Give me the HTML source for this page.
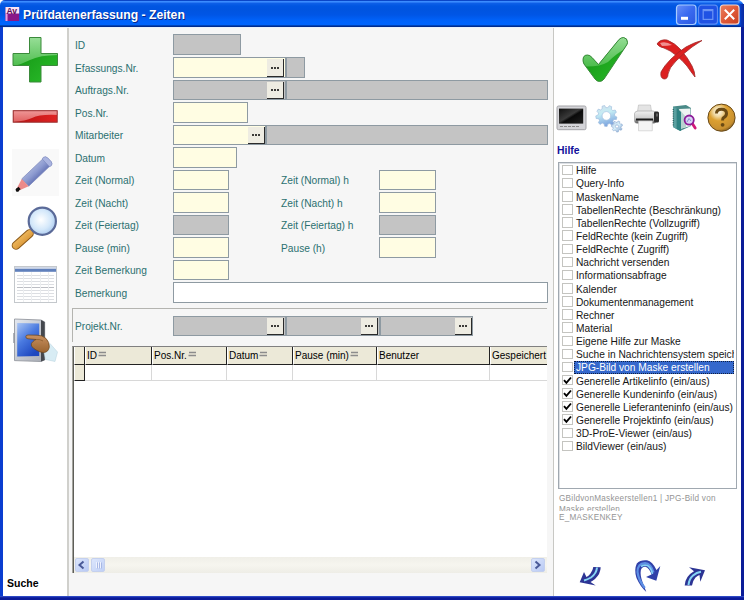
<!DOCTYPE html>
<html><head><meta charset="utf-8">
<style>
*{margin:0;padding:0;box-sizing:border-box}
html,body{width:744px;height:600px;overflow:hidden;background:#fff}
body{position:relative;font-family:"Liberation Sans",sans-serif}
.a{position:absolute}
#title{left:0;top:0;width:744px;height:27px;border-radius:5px 7px 0 0;
 background:linear-gradient(to bottom,#0a46c8 0px,#0a46c8 1px,#3a8cff 1px,#3a8cff 2px,#2878f4 2px,#2878f4 3px,#0e60e8 3px,#0056e2 6px,#0054e0 10px,#0056e6 15px,#0061f8 20px,#0064fc 23px,#0064fc 25px,#0044b8 25px,#0044b8 26px,#002c90 26px,#002c90 27px)}
#title .t{left:23px;top:8px;color:#fff;font-weight:bold;font-size:12.2px;letter-spacing:0;text-shadow:1px 1px 0 #0a2a8a}
.bord{background:#0a3dd0}
#main{left:69px;top:27px;width:484px;height:569px;background:#f6f6f6}
#lp{left:3px;top:27px;width:64px;height:569px;background:#fff}
#sep1{left:67px;top:27px;width:2px;height:569px;background:#d0d0cc}
#rp{left:554px;top:27px;width:187px;height:569px;background:#fff}
#sep2{left:553px;top:27px;width:1px;height:569px;background:#c8c8c4}
.lbl{color:#2b7070;font-size:10.2px;white-space:nowrap;line-height:12px}
.f{border:1px solid #8e9aa2}
.y{background:#fffde3}
.g{background:#c4c4c4}
.w{background:#fff}
.btn{width:17px;background:#eeece2;border-right:1.5px solid #2a2a2a;border-bottom:1.5px solid #2a2a2a}
.btn i{position:absolute;width:2px;height:2px;background:#000;border-radius:1px}
.hd{top:347px;height:18px;background:#ece9d8;border-left:1px solid #fff;border-right:1px solid #222;border-bottom:1px solid #222;font-size:10px;line-height:18px;padding-left:1px;white-space:nowrap;overflow:hidden;color:#000}
.cell{top:365px;height:16px;border-right:1px solid #d8d8d8;border-bottom:1px solid #d8d8d8;background:#fff}
.cb{position:absolute;left:3px;width:10.5px;height:10.5px;border:1px solid #c4c4c0;background:#fff}
.ck{position:absolute;left:0px;top:0px}
.it{position:absolute;left:15px;text-indent:1px;height:13px;line-height:13px;font-size:10.2px;white-space:nowrap;color:#161616;padding:0 1px}
.it.sel{background:#3568cc;color:#fff;outline:1px dotted #102040;outline-offset:-1px;width:160px}
.gt{font-size:8.2px;letter-spacing:.25px;line-height:10px;color:#949494;white-space:nowrap}
</style></head><body>
<!-- frame -->
<div class="a" id="title">
  <div class="a t">Prüfdatenerfassung - Zeiten</div>
</div>
<div class="a" style="left:739px;top:4px;width:5px;height:23px;background:linear-gradient(to right,rgba(0,40,170,0),#0836b8 2px,#0a2aa0)"></div>
<div class="a bord" style="left:0;top:27px;width:3px;height:573px"></div>
<div class="a" style="left:740px;top:27px;width:4px;height:573px;background:linear-gradient(to right,#3a5ad0 0,#3a5ad0 1px,#0a1c98 1px)"></div>
<div class="a" style="left:0;top:596px;width:744px;height:4px;background:linear-gradient(to bottom,#4060d8 0,#1a30b0 1px,#0a1a98 2px)"></div>
<div class="a" id="lp"></div>
<div class="a" id="sep1"></div>
<div class="a" id="main"></div>
<div class="a" id="sep2"></div>
<div class="a" id="rp"></div>

<div class="a" style="left:3px;top:27px;width:737px;height:1px;background:#eaf2fa"></div>
<!-- labels -->
<div class="a lbl" style="left:75px;top:40px">ID</div>
<div class="a lbl" style="left:75px;top:63px">Efassungs.Nr.</div>
<div class="a lbl" style="left:75px;top:85px">Auftrags.Nr.</div>
<div class="a lbl" style="left:75px;top:108px">Pos.Nr.</div>
<div class="a lbl" style="left:75px;top:130px">Mitarbeiter</div>
<div class="a lbl" style="left:75px;top:153px">Datum</div>
<div class="a lbl" style="left:75px;top:175px">Zeit (Normal)</div>
<div class="a lbl" style="left:75px;top:198px">Zeit (Nacht)</div>
<div class="a lbl" style="left:75px;top:220px">Zeit (Feiertag)</div>
<div class="a lbl" style="left:75px;top:243px">Pause (min)</div>
<div class="a lbl" style="left:75px;top:265px">Zeit Bemerkung</div>
<div class="a lbl" style="left:75px;top:288px">Bemerkung</div>
<div class="a lbl" style="left:281px;top:175px">Zeit (Normal) h</div>
<div class="a lbl" style="left:281px;top:198px">Zeit (Nacht) h</div>
<div class="a lbl" style="left:281px;top:220px">Zeit (Feiertag) h</div>
<div class="a lbl" style="left:281px;top:243px">Pause (h)</div>
<div class="a lbl" style="left:75px;top:321px">Projekt.Nr.</div>

<!-- fields -->
<div class="a f g" style="left:173px;top:34px;width:68px;height:21px"></div>
<div class="a f y" style="left:173px;top:57px;width:113px;height:21px"></div>
<div class="a f g" style="left:286px;top:57px;width:19px;height:21px"></div>
<div class="a btn" style="left:267px;top:59px;height:18px"><i style="left:4px;top:8px"></i><i style="left:7px;top:8px"></i><i style="left:10px;top:8px"></i></div>
<div class="a f g" style="left:173px;top:80px;width:113px;height:20px"></div>
<div class="a f g" style="left:286px;top:80px;width:262px;height:20px"></div>
<div class="a btn" style="left:267px;top:82px;height:17px"><i style="left:4px;top:7px"></i><i style="left:7px;top:7px"></i><i style="left:10px;top:7px"></i></div>
<div class="a f y" style="left:173px;top:102px;width:75px;height:21px"></div>
<div class="a f y" style="left:173px;top:125px;width:93px;height:20px"></div>
<div class="a f g" style="left:266px;top:125px;width:282px;height:20px"></div>
<div class="a btn" style="left:248px;top:127px;height:17px"><i style="left:4px;top:7px"></i><i style="left:7px;top:7px"></i><i style="left:10px;top:7px"></i></div>
<div class="a f y" style="left:173px;top:147px;width:64px;height:21px"></div>
<div class="a f y" style="left:173px;top:170px;width:56px;height:20px"></div>
<div class="a f y" style="left:379px;top:170px;width:57px;height:20px"></div>
<div class="a f y" style="left:173px;top:192px;width:56px;height:21px"></div>
<div class="a f y" style="left:379px;top:192px;width:57px;height:21px"></div>
<div class="a f g" style="left:173px;top:215px;width:56px;height:20px"></div>
<div class="a f g" style="left:379px;top:215px;width:57px;height:20px"></div>
<div class="a f y" style="left:173px;top:237px;width:56px;height:21px"></div>
<div class="a f y" style="left:379px;top:237px;width:57px;height:21px"></div>
<div class="a f y" style="left:173px;top:260px;width:56px;height:20px"></div>
<div class="a f w" style="left:173px;top:282px;width:375px;height:21px"></div>

<!-- group box -->
<div class="a" style="left:72px;top:308px;width:475px;height:34px;border-top:1px solid #b4b4b0;border-left:1px solid #b4b4b0"></div>
<div class="a f g" style="left:173px;top:316px;width:113px;height:20px"></div>
<div class="a f g" style="left:286px;top:316px;width:94px;height:20px"></div>
<div class="a f g" style="left:380px;top:316px;width:93px;height:20px"></div>
<div class="a btn" style="left:267px;top:318px;height:17px"><i style="left:4px;top:7px"></i><i style="left:7px;top:7px"></i><i style="left:10px;top:7px"></i></div>
<div class="a btn" style="left:361px;top:318px;height:17px"><i style="left:4px;top:7px"></i><i style="left:7px;top:7px"></i><i style="left:10px;top:7px"></i></div>
<div class="a btn" style="left:455px;top:318px;height:17px"><i style="left:4px;top:7px"></i><i style="left:7px;top:7px"></i><i style="left:10px;top:7px"></i></div>

<!-- grid -->
<div class="a" style="left:72px;top:346px;width:475px;height:227px;background:#fff;border-left:1px solid #a4a49e;border-top:1px solid #808080;box-shadow:inset 1px 0 0 #5e5e58"></div>
<div class="a hd" style="left:74px;width:11px"></div>
<div class="a hd" style="left:85px;width:67px">ID<svg width="8" height="6" style="margin-left:1px;vertical-align:2px"><path d="M1 1.5H8M0.5 4.5H8" stroke="#8c8c8c" stroke-width="1.6"/></svg></div>
<div class="a hd" style="left:152px;width:75px">Pos.Nr.<svg width="8" height="6" style="margin-left:1px;vertical-align:2px"><path d="M1 1.5H8M0.5 4.5H8" stroke="#8c8c8c" stroke-width="1.6"/></svg></div>
<div class="a hd" style="left:227px;width:66px">Datum<svg width="8" height="6" style="margin-left:1px;vertical-align:2px"><path d="M1 1.5H8M0.5 4.5H8" stroke="#8c8c8c" stroke-width="1.6"/></svg></div>
<div class="a hd" style="left:293px;width:84px">Pause (min)<svg width="8" height="6" style="margin-left:1px;vertical-align:2px"><path d="M1 1.5H8M0.5 4.5H8" stroke="#8c8c8c" stroke-width="1.6"/></svg></div>
<div class="a hd" style="left:377px;width:113px">Benutzer</div>
<div class="a hd" style="left:490px;width:57px;border-right:none">Gespeichert</div>
<div class="a" style="left:74px;top:365px;width:11px;height:16px;background:#ece9d8;border-left:1px solid #fff;border-right:1px solid #222;border-bottom:1px solid #222"></div>
<div class="a cell" style="left:85px;width:67px"></div>
<div class="a cell" style="left:152px;width:75px"></div>
<div class="a cell" style="left:227px;width:66px"></div>
<div class="a cell" style="left:293px;width:84px"></div>
<div class="a cell" style="left:377px;width:113px"></div>
<div class="a cell" style="left:490px;width:57px;border-right:none"></div>
<!-- scrollbar -->
<div class="a" style="left:74px;top:557px;width:473px;height:16px;background:linear-gradient(to bottom,#f0efe8,#f6f5ef 50%,#eeede6)"></div>
<div class="a" style="left:75px;top:558px;width:14px;height:14px;border-radius:2px;background:linear-gradient(135deg,#dce6fc,#b8c9f4);border:1px solid #c4d0ee"></div>
<div class="a" style="left:91px;top:558px;width:14px;height:14px;border-radius:2px;background:linear-gradient(135deg,#dce6fc,#c0d0f6);border:1px solid #c4d0ee"></div>
<div class="a" style="left:531px;top:558px;width:14px;height:14px;border-radius:2px;background:linear-gradient(135deg,#dce6fc,#b8c9f4);border:1px solid #c4d0ee"></div>
<svg class="a" style="left:74px;top:557px" width="473" height="16" viewBox="74 557 473 16">
<path d="M83.5 561.5L79.5 565L83.5 568.5" fill="none" stroke="#4a5a98" stroke-width="2"/>
<path d="M96.5 562v6M98.5 562v6M100.5 562v6" stroke="#eef2fe" stroke-width="1"/>
<path d="M97.5 562.5v6M99.5 562.5v6M101.5 562.5v6" stroke="#a8b8e4" stroke-width="1"/>
<path d="M535.5 561.5L539.5 565L535.5 568.5" fill="none" stroke="#4a5a98" stroke-width="2"/>
</svg>

<!-- left toolbar text -->
<div class="a" style="left:7px;top:577px;font-size:10.5px;font-weight:bold;color:#000">Suche</div>

<!-- right panel -->
<div class="a" style="left:557px;top:145px;font-size:10.4px;font-weight:bold;color:#10109a">Hilfe</div>
<div class="a" style="left:558px;top:162px;width:179px;height:327px;border:1px solid #a0a8b0;box-shadow:inset 1px 1px 0 #dde0e4;background:#fff"></div>

<!-- checklist -->
<div class="a" style="left:559px;top:163px;width:175px;height:325px;overflow:hidden">
<div class="cb" style="top:1.7px"></div><div class="it" style="top:1.3px">Hilfe</div>
<div class="cb" style="top:14.8px"></div><div class="it" style="top:14.4px">Query-Info</div>
<div class="cb" style="top:28.0px"></div><div class="it" style="top:27.6px">MaskenName</div>
<div class="cb" style="top:41.1px"></div><div class="it" style="top:40.7px">TabellenRechte (Beschränkung)</div>
<div class="cb" style="top:54.3px"></div><div class="it" style="top:53.9px">TabellenRechte (Vollzugriff)</div>
<div class="cb" style="top:67.4px"></div><div class="it" style="top:67.0px">FeldRechte (kein Zugriff)</div>
<div class="cb" style="top:80.5px"></div><div class="it" style="top:80.1px">FeldRechte ( Zugriff)</div>
<div class="cb" style="top:93.7px"></div><div class="it" style="top:93.3px">Nachricht versenden</div>
<div class="cb" style="top:106.8px"></div><div class="it" style="top:106.4px">Informationsabfrage</div>
<div class="cb" style="top:120.0px"></div><div class="it" style="top:119.6px">Kalender</div>
<div class="cb" style="top:133.1px"></div><div class="it" style="top:132.7px">Dokumentenmanagement</div>
<div class="cb" style="top:146.2px"></div><div class="it" style="top:145.8px">Rechner</div>
<div class="cb" style="top:159.4px"></div><div class="it" style="top:159.0px">Material</div>
<div class="cb" style="top:172.5px"></div><div class="it" style="top:172.1px">Eigene Hilfe zur Maske</div>
<div class="cb" style="top:185.7px"></div><div class="it" style="top:185.3px">Suche in Nachrichtensystem speichern</div>
<div class="cb" style="top:198.8px"></div><div class="it sel" style="top:198.4px">JPG-Bild von Maske erstellen</div>
<div class="cb" style="top:211.9px"><svg class="ck" width="9" height="9" viewBox="0 0 9 9"><path d="M1 4.2L3.4 6.8L8 1.5" fill="none" stroke="#000" stroke-width="1.9"/></svg></div><div class="it" style="top:211.5px">Generelle Artikelinfo (ein/aus)</div>
<div class="cb" style="top:225.1px"><svg class="ck" width="9" height="9" viewBox="0 0 9 9"><path d="M1 4.2L3.4 6.8L8 1.5" fill="none" stroke="#000" stroke-width="1.9"/></svg></div><div class="it" style="top:224.7px">Generelle Kundeninfo (ein/aus)</div>
<div class="cb" style="top:238.2px"><svg class="ck" width="9" height="9" viewBox="0 0 9 9"><path d="M1 4.2L3.4 6.8L8 1.5" fill="none" stroke="#000" stroke-width="1.9"/></svg></div><div class="it" style="top:237.8px">Generelle Lieferanteninfo (ein/aus)</div>
<div class="cb" style="top:251.4px"><svg class="ck" width="9" height="9" viewBox="0 0 9 9"><path d="M1 4.2L3.4 6.8L8 1.5" fill="none" stroke="#000" stroke-width="1.9"/></svg></div><div class="it" style="top:251.0px">Generelle Projektinfo (ein/aus)</div>
<div class="cb" style="top:264.5px"></div><div class="it" style="top:264.1px">3D-ProE-Viewer (ein/aus)</div>
<div class="cb" style="top:277.6px"></div><div class="it" style="top:277.2px">BildViewer (ein/aus)</div>
</div>
<div class="a gt" style="left:559px;top:494px">GBildvonMaskeerstellen1 | JPG-Bild von</div>
<div class="a gt" style="left:559px;top:505px;height:6px;overflow:hidden">Maske erstellen</div>
<div class="a gt" style="left:559px;top:513px">E_MASKENKEY</div>

<!-- ICONS: one full-window svg overlay -->
<svg class="a" style="left:0;top:0" width="744" height="600" viewBox="0 0 744 600">
<defs>
 <linearGradient id="gG" x1="0" y1="0" x2="0" y2="1"><stop offset="0" stop-color="#9be09b"/><stop offset="1" stop-color="#4cbc4c"/></linearGradient>
 <linearGradient id="gGd" x1="0" y1="0" x2="1" y2="1"><stop offset="0" stop-color="#0f8a0f"/><stop offset="1" stop-color="#2cc02c"/></linearGradient>
 <linearGradient id="gR" x1="0" y1="0" x2="0" y2="1"><stop offset="0" stop-color="#f09a9a"/><stop offset="1" stop-color="#e06060"/></linearGradient>
 <linearGradient id="gRd" x1="0" y1="0" x2="1" y2="0"><stop offset="0" stop-color="#b81010"/><stop offset="1" stop-color="#e02424"/></linearGradient>
 <linearGradient id="gPen" x1="0" y1="0" x2="0" y2="1"><stop offset="0" stop-color="#a0acd8"/><stop offset=".45" stop-color="#8c9ad0"/><stop offset="1" stop-color="#6a78b8"/></linearGradient>
 <radialGradient id="gLens" cx=".45" cy=".45" r=".6"><stop offset="0" stop-color="#ffffff"/><stop offset=".6" stop-color="#d4e8fa"/><stop offset="1" stop-color="#a8c8ee"/></radialGradient>
 <linearGradient id="gHandle" x1="0" y1="0" x2="1" y2="1"><stop offset="0" stop-color="#f8c870"/><stop offset="1" stop-color="#d08828"/></linearGradient>
 <linearGradient id="gScr" x1="0" y1="0" x2=".6" y2="1"><stop offset="0" stop-color="#a8c4f4"/><stop offset=".5" stop-color="#4a7ae0"/><stop offset="1" stop-color="#1e48c0"/></linearGradient>
 <radialGradient id="gHelp" cx=".38" cy=".28" r=".8"><stop offset="0" stop-color="#fffcf0"/><stop offset=".22" stop-color="#f0d8a0"/><stop offset=".42" stop-color="#dca030"/><stop offset=".8" stop-color="#c89030"/><stop offset="1" stop-color="#6a4c18"/></radialGradient>
 <linearGradient id="gGear" x1="0" y1="0" x2=".3" y2="1"><stop offset="0" stop-color="#d4e0ec"/><stop offset=".45" stop-color="#c4ecf4"/><stop offset="1" stop-color="#80a8e0"/></linearGradient><linearGradient id="gGear2" x1="0" y1="0" x2="1" y2="1"><stop offset="0" stop-color="#b8cce4"/><stop offset=".5" stop-color="#d8f0fa"/><stop offset="1" stop-color="#7a98c8"/></linearGradient>
 <linearGradient id="gMon" x1="0" y1="0" x2="1" y2="1"><stop offset="0" stop-color="#101010"/><stop offset=".45" stop-color="#3a3a3a"/><stop offset=".55" stop-color="#0a0a0a"/><stop offset="1" stop-color="#202020"/></linearGradient>
 <linearGradient id="gPrn" x1="0" y1="0" x2="0" y2="1"><stop offset="0" stop-color="#f0f0f0"/><stop offset=".6" stop-color="#cccccc"/><stop offset="1" stop-color="#505050"/></linearGradient>
 <linearGradient id="gMinB" x1="0" y1="0" x2="1" y2="1"><stop offset="0" stop-color="#6a90f8"/><stop offset=".5" stop-color="#3a6af0"/><stop offset="1" stop-color="#2a58e0"/></linearGradient>
 <linearGradient id="gClose" x1="0" y1="0" x2="1" y2="1"><stop offset="0" stop-color="#e88060"/><stop offset=".5" stop-color="#e05a38"/><stop offset="1" stop-color="#c84020"/></linearGradient>
 <clipPath id="cPlus"><path d="M29.5 37.5h11.5v16h16.5v12h-16.5v16.5h-11.5v-16.5h-16.5v-12h16.5z"/></clipPath>
 <clipPath id="cMinus"><rect x="13.2" y="110.7" width="44" height="11.5"/></clipPath>
 <clipPath id="cCheck"><path d="M583 60 Q583 55 587.5 55 Q590 55 592 57.5 L598.5 64.5 L619 39.5 Q621 37.5 623.5 37.5 Q627.5 38 627.5 42.5 Q627.5 44 626 46 L604 79 Q602 81.5 599.5 81.5 Q597 81.5 595 79 L584 64 Q583 62 583 60Z"/></clipPath>
</defs>

<!-- title app icon -->
<rect x="5.5" y="7" width="13.7" height="14" fill="#8e1c8e"/>
<rect x="5.5" y="7" width="13.7" height="6.5" fill="#fbe4f4"/>
<rect x="5.5" y="13.5" width="2" height="7.5" fill="#e8a0e0"/><rect x="8" y="14" width="11" height="7" fill="#8a1888"/>
<text x="6.5" y="13.6" font-family="Liberation Sans" font-weight="bold" font-size="8.6" letter-spacing="-.2" fill="#5c0c58">Av</text>

<!-- title buttons -->
<rect x="676.5" y="5" width="19.5" height="19.5" rx="3" fill="url(#gMinB)" stroke="#a8ccff" stroke-width="1.2"/>
<rect x="681" y="16.8" width="7" height="3" fill="#fff"/>
<rect x="698.5" y="5.2" width="19" height="19" rx="3" fill="#1f52e4" stroke="#5a8cf4" stroke-width="1.2"/>
<rect x="703.2" y="9.6" width="9.6" height="9.8" fill="none" stroke="#6c94f4" stroke-width="1.2"/>
<rect x="703.2" y="9.2" width="9.6" height="2" fill="#6c94f4"/>
<rect x="720.3" y="5" width="18.7" height="19.2" rx="3" fill="url(#gClose)" stroke="#f4d4c8" stroke-width="1.2"/>
<path d="M724.8 9.8L734.2 19.2M734.2 9.8L724.8 19.2" stroke="#fff" stroke-width="2"/>

<!-- plus -->
<g clip-path="url(#cPlus)">
 <rect x="12" y="36" width="47" height="47" fill="url(#gGd)"/>
 <path d="M10 36H60V55Q40 55 30 60Q20 65 10 67Z" fill="url(#gG)"/>
</g>
<path d="M29.5 37.5h11.5v16h16.5v12h-16.5v16.5h-11.5v-16.5h-16.5v-12h16.5z" fill="none" stroke="#3b8a3b" stroke-width="1"/>

<!-- minus -->
<g clip-path="url(#cMinus)">
 <rect x="13" y="110" width="45" height="13" fill="url(#gRd)"/>
 <path d="M12 110H58V115Q40 114 32 118Q26 121 12 122Z" fill="url(#gR)"/>
</g>
<rect x="13.2" y="110.7" width="44" height="11.5" fill="none" stroke="#983030" stroke-width="1"/>

<!-- pencil -->
<rect x="12" y="149" width="47" height="47" fill="#f9f9f9"/>
<g transform="translate(16.5 190.8) rotate(-43.5)">
 <path d="M12 -5 L42 -5 Q44.5 -5.5 45 -2.5 L45 2.5 Q44.5 5.5 42 5 L12 5 Z" fill="url(#gPen)" stroke="#7c88bc" stroke-width=".7"/>
 <path d="M40.5 -5.3 L42.5 -5.8 Q45 -5.5 45.3 -2.5 L45.3 2.5 Q45 5.5 42.5 5.8 L40.5 5.3Z" fill="#aab4e0" stroke="#7c88bc" stroke-width=".6"/>
 <path d="M12 -5 L2 -1.6 Q0 0 2 1.6 L12 5Z" fill="#ec8a8a"/>
 <path d="M4.2 -1.7 L0.5 -0.8 Q-1.5 0 0.5 0.8 L4.2 1.7 Z" fill="#111"/>
 <circle cx="1.4" cy="0" r="1.9" fill="#111"/>
</g>
<!-- magnifier -->
<path d="M30 233.5 L33 230.5" stroke="#505a70" stroke-width="3"/>
<path d="M16 245.5 L29.5 233.5" stroke="#8a5818" stroke-width="8.6" stroke-linecap="round"/>
<path d="M16 245.5 L29.5 233.5" stroke="url(#gHandle)" stroke-width="6.6" stroke-linecap="round"/>
<circle cx="42.3" cy="221.2" r="13.6" fill="url(#gLens)" stroke="#5a6a98" stroke-width="2.2"/>
<!-- table icon -->
<rect x="14.5" y="266.5" width="42" height="36" fill="#fff" stroke="#c4c8cc" stroke-width="1"/>
<rect x="15" y="267" width="41" height="1.8" fill="#d0d8e8"/>
<rect x="15" y="268.8" width="41" height="3" fill="#6080bc"/>
<g stroke="#dcdee2" stroke-width="1">
 <path d="M17 275.5H54M17 278.5H54M17 281.5H54M17 284.5H54M17 290.5H54M17 293.5H54M17 296.5H54M17 299.5H54"/>
</g>
<g stroke="#bcbec4" stroke-width="1"><path d="M17 287.5H54"/></g>
<g stroke="#eceef0" stroke-width="1"><path d="M23.5 272V302M31.5 272V302M40.5 272V302M48.5 272V302"/></g>
<!-- touchscreen -->
<defs><linearGradient id="gHand" x1="0" y1="0" x2="0" y2="1"><stop offset="0" stop-color="#c89060"/><stop offset="1" stop-color="#9a6430"/></linearGradient>
<linearGradient id="gFrame" x1="0" y1="0" x2="1" y2="1"><stop offset="0" stop-color="#e4e8f0"/><stop offset="1" stop-color="#a8acb4"/></linearGradient></defs>
<rect x="13" y="333" width="2.5" height="10" fill="#b0b4bc"/>
<path d="M14.5 319 L41 320 L44.7 322 L44.7 360 L41 361.5 L14.5 360.6Z" fill="url(#gFrame)" stroke="#8a8e96" stroke-width=".8"/>
<path d="M41 320 L44.7 322 L44.7 360 L41 361.5Z" fill="#44484e"/>
<path d="M17.2 323 L39.2 323.5 L39.2 356 L17.2 356.5Z" fill="url(#gScr)"/>
<path d="M43 348 L50 343.5 L57.5 352 L55 361.5 L45.5 359.5Z" fill="#d8ecf4" stroke="#b4d0dc" stroke-width=".5"/>
<path d="M25.8 336.8 Q25.8 335 28 335 L37 335.2 Q42 335 46 338.5 Q49.5 342 49.3 347 Q48.5 352 44 352.5 Q40 352.5 37 350.5 Q33 348.5 31.5 346 Q30.5 343.5 33 341.5 Q34.5 340 36 339.5 L28 338.8 Q25.8 338.6 25.8 336.8Z" fill="url(#gHand)" stroke="#6a4418" stroke-width=".7"/>
<path d="M36 339.5 Q40 339 43 341" fill="none" stroke="#7a5024" stroke-width=".6"/>
<!-- check -->
<g clip-path="url(#cCheck)">
 <rect x="580" y="35" width="50" height="50" fill="url(#gGd)"/>
 <path d="M578 35H632V45Q618 52 608 62Q598 68 578 66Z" fill="url(#gG)"/>
</g>
<path d="M583 60 Q583 55 587.5 55 Q590 55 592 57.5 L598.5 64.5 L619 39.5 Q621 37.5 623.5 37.5 Q627.5 38 627.5 42.5 Q627.5 44 626 46 L604 79 Q602 81.5 599.5 81.5 Q597 81.5 595 79 L584 64 Q583 62 583 60Z" fill="none" stroke="#3b8a3b" stroke-width="1"/>

<!-- red X -->
<path d="M657 44 Q660 39 667 40 Q675 43 681 50 Q688 58 692 66 Q695 72 695 77 Q691 72 687 66 Q682 60 677 56 Q670 50 664 48 Q659 47 657 44Z" fill="#dc2020" stroke="#a02828" stroke-width=".8"/>
<path d="M702 40.5 Q695 42 686 47 Q678 52 671 59 Q664 66 661 72 Q660 78 664 79 Q668 79 668 74 Q669 68 676 61 Q684 53 692 47 Q698 43 702 40.5Z" fill="#dc2020" stroke="#a02828" stroke-width=".8"/>
<path d="M660 43 Q666 41 672 45 Q668 46 662 46Z" fill="#f09090"/>

<!-- monitor -->
<rect x="557" y="106" width="29" height="23.7" rx="1.5" fill="#d4d4d8" stroke="#a4a4a8" stroke-width="1"/>
<rect x="559" y="108.6" width="24.2" height="15" fill="url(#gMon)"/>
<path d="M560 126.5h20" stroke="#8a8a8a" stroke-width="1" stroke-dasharray="3 1"/>

<!-- gears -->
<path fill-rule="evenodd" fill="url(#gGear)" stroke="#9ab8dc" stroke-width=".6" d="M614.7 115.9 L616.9 117.0 L616.4 119.5 L613.9 119.5 L612.8 121.2 L613.8 123.5 L611.7 125.1 L609.8 123.5 L607.8 124.1 L607.1 126.5 L604.6 126.3 L604.1 123.9 L602.2 123.1 L600.2 124.5 L598.3 122.7 L599.5 120.5 L598.6 118.7 L596.1 118.5 L595.8 115.9 L598.1 115.0 L598.6 113.1 L596.9 111.3 L598.3 109.1 L600.6 109.9 L602.2 108.7 L602.1 106.2 L604.6 105.5 L605.8 107.6 L607.8 107.7 L609.3 105.7 L611.7 106.7 L611.3 109.2 L612.8 110.6 L615.2 110.0 L616.4 112.3 L614.5 113.9Z M610.7 115.9 A4.3 4.3 0 1 0 602.1 115.9 A4.3 4.3 0 1 0 610.7 115.9Z"/>
<path fill-rule="evenodd" fill="url(#gGear2)" stroke="#8aa8d0" stroke-width=".6" d="M621.0 127.7 L622.1 128.9 L621.1 130.3 L619.7 129.7 L618.5 130.4 L618.3 131.9 L616.6 132.1 L616.1 130.6 L614.9 130.1 L613.6 130.9 L612.4 129.7 L613.2 128.4 L612.8 127.1 L611.4 126.6 L611.7 124.8 L613.2 124.7 L613.9 123.6 L613.4 122.2 L615.0 121.3 L616.0 122.4 L617.3 122.3 L618.2 121.0 L619.8 121.7 L619.6 123.2 L620.5 124.1 L622.0 124.0 L622.5 125.7 L621.2 126.4Z M618.6 126.5 A1.6 1.6 0 1 0 615.4 126.5 A1.6 1.6 0 1 0 618.6 126.5Z"/>
<!-- printer -->
<path d="M637.5 111.5 L638.5 105 L650.5 105 L651.5 111.5Z" fill="#e4e4e4" stroke="#b8b8b8" stroke-width=".6"/>
<path d="M634.5 113.5 Q635 111 638 111 L653 111 Q656 111 656 114 L656 121 Q656 123.3 653 123.3 L637 123.3 Q634.5 123.3 634.5 121Z" fill="url(#gPrn)" stroke="#9a9a9a" stroke-width=".6"/>
<rect x="654" y="111.5" width="5" height="11" rx="1.5" fill="#2a2a2a"/>
<rect x="656" y="113.5" width="2" height="3" fill="#606060"/>
<path d="M636 119.5 H653" stroke="#1a1a1a" stroke-width="2"/>
<path d="M638.5 121 L652.3 121 L652.3 130.8 L638.5 130.8Z" fill="#f4f4f4" stroke="#c4c4c4" stroke-width=".6"/>
<!-- book search -->
<path d="M673 106.5 L686 105 L691 108 L691 126 L680 131 L673 127Z" fill="#4a8a88"/>
<path d="M679 109 L690.5 108.5 L690.5 126 L680 129Z" fill="#eef4f2"/>
<path d="M679 109 L686 117 L686 127 L680 129Z" fill="#b8d4d0"/>
<path d="M676.5 108 L681 112 L681 131 L676.5 129Z" fill="#2e8282"/>
<path d="M673 107 L676.5 108 L676.5 129 L673 127Z" fill="#5aa0a0"/>
<path d="M673.2 109v17" stroke="#1e4a4a" stroke-width="1" stroke-dasharray="1 1.2"/>
<path d="M692.3 123.5 L695.2 128" stroke="#d01878" stroke-width="2.8" stroke-linecap="round"/>
<circle cx="689.2" cy="120.1" r="4.6" fill="#d8d4f4" stroke="#8c1c98" stroke-width="1.8"/>
<path d="M687 122 L689 118.5 L691 121" fill="none" stroke="#7080c0" stroke-width=".8"/>
<!-- help -->
<circle cx="721.5" cy="117.7" r="13.6" fill="url(#gHelp)" stroke="#6a4a18" stroke-width="1"/>
<path d="M716.5 113.5 Q716.5 109.3 721.5 109.3 Q726.5 109.3 726.5 113.5 Q726.5 116.2 723.7 117.6 Q722.6 118.3 722.6 120.5" fill="none" stroke="#6a4a14" stroke-width="3"/>
<circle cx="722.6" cy="124.8" r="1.9" fill="#6a4a14"/>

<!-- bottom arrows -->
<defs>
<linearGradient id="gArr" x1="0" y1="0" x2="1" y2="1"><stop offset="0" stop-color="#5a8ae8"/><stop offset="1" stop-color="#2a36a0"/></linearGradient>
</defs>
<path d="M593.3 567 L600.7 567.3 Q600.5 574 595 579 Q592.5 581 590.5 582 L595.7 585.5 L579.7 582.3 L584 572 L586.5 577 Q589 575.5 590.5 573.5 Q592.8 570.5 593.3 567Z" fill="#2c3494"/>
<path d="M597 567.5 Q596.5 573.5 591 577.5 Q587.5 579.5 584 580.5" fill="none" stroke="#86d4f4" stroke-width="2"/>
<path d="M646.3 592 Q640.5 587 636.5 578 Q633.8 570 636.8 563.5 Q640.5 559.6 647 560.3 Q652.5 561.5 656.5 570 L660.3 566 L656.3 580.7 L646 577 L651.5 574.5 Q649.5 568.5 645.5 566.8 Q641.8 566.5 640.8 570.5 Q640 575 642.5 582 Q644.5 587 646.3 592Z" fill="#3040a8"/>
<path d="M644.8 588 Q638.5 580 637.5 572 Q637.5 563.5 645 563 Q651 563.5 653.5 572.5" fill="none" stroke="#5c8ee4" stroke-width="2.2"/>
<path d="M641 566.5 Q644 564.5 647.5 565.5 Q651 567.5 652.5 574" fill="none" stroke="#84d0f4" stroke-width="1.6"/>
<path d="M684.7 585.5 L692 585.5 Q692.5 581 695.5 577.5 Q697.5 575.5 699.5 575 L700.3 581.7 L705 570.3 L689 567.3 L694 571.3 Q690 573.5 687.5 577 Q685 580.5 684.7 585.5Z" fill="#2c3494"/>
<path d="M688.5 585 Q689 579 693 575.5 Q696.5 572.5 701 571.8" fill="none" stroke="#86d4f4" stroke-width="2"/>
</svg>

</body></html>
